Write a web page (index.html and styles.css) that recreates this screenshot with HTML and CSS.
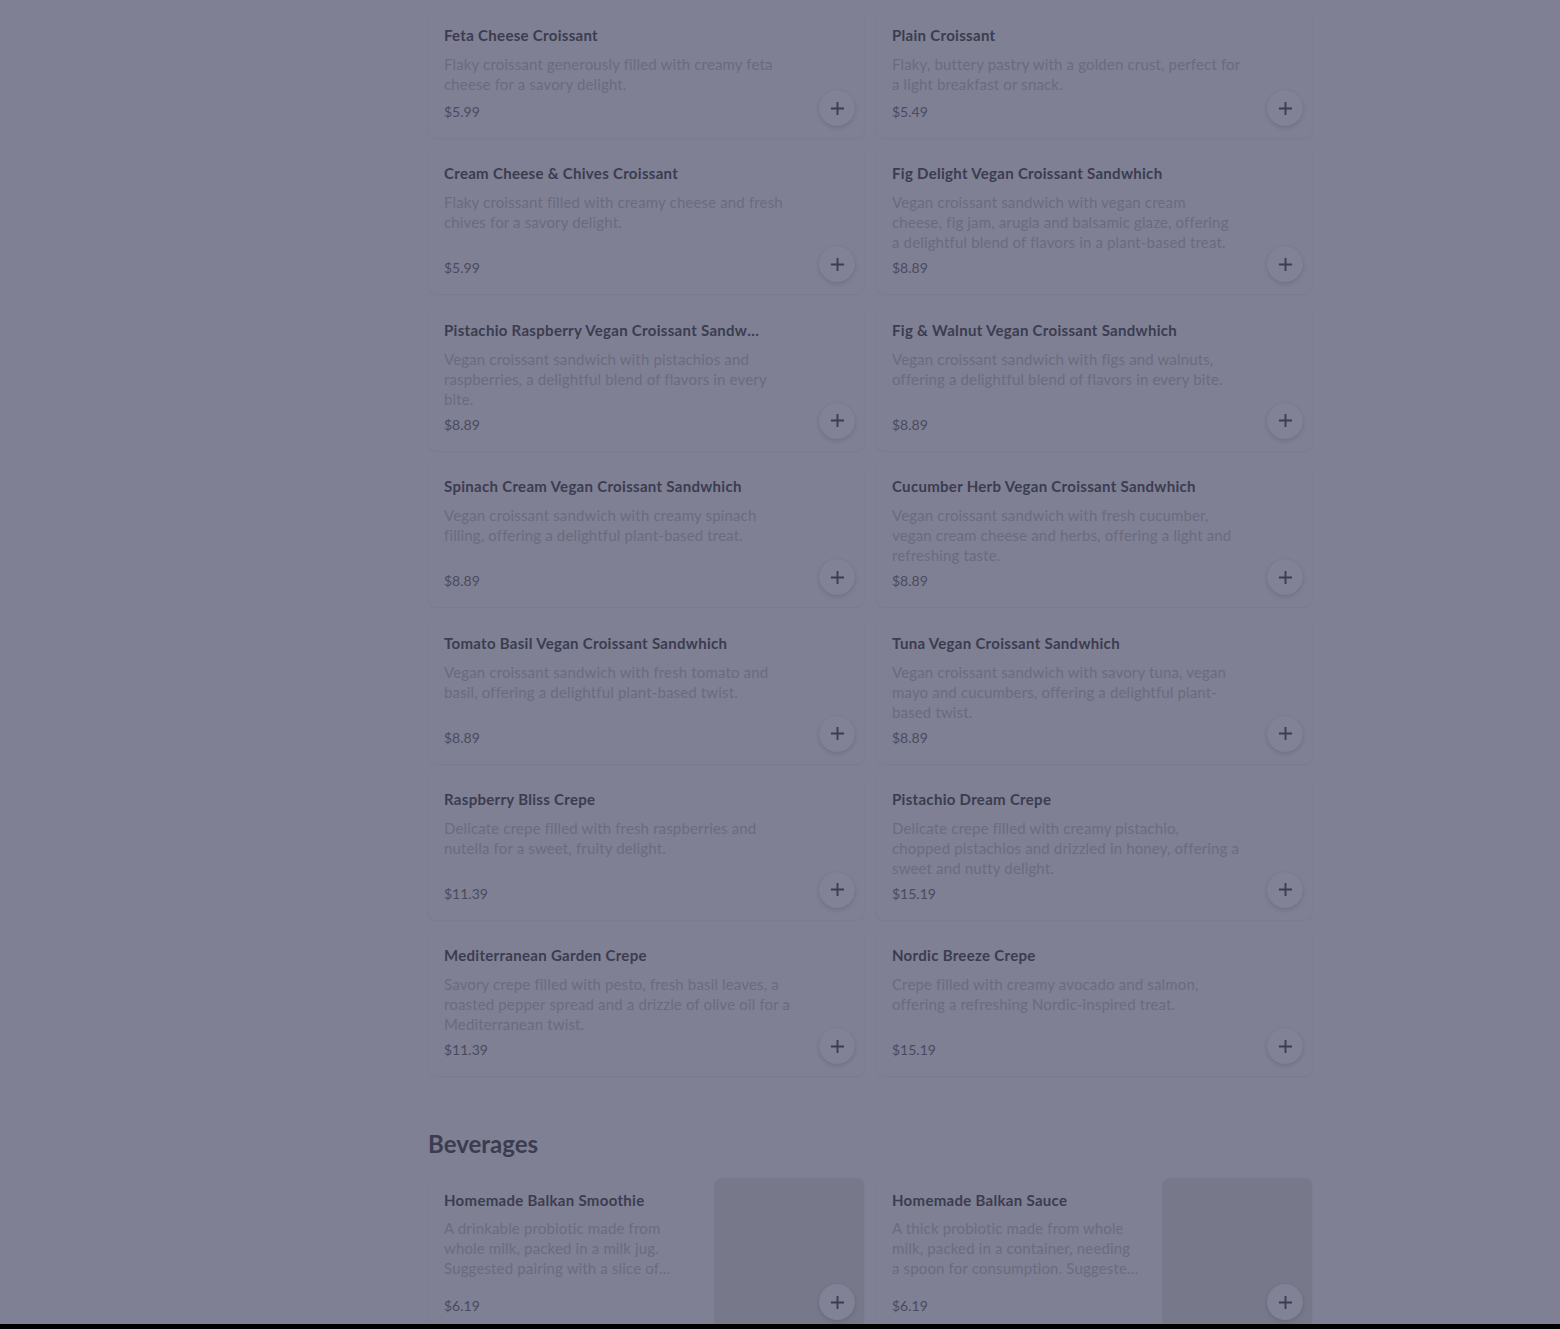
FILE: index.html
```html
<!DOCTYPE html>
<html lang="en">
<head>
<meta charset="utf-8">
<title>Menu</title>
<link rel="stylesheet" href="styles.css">
</head>
<body>
<div class="page">
  <main class="menu">
    <section class="category">
      <div class="grid">
        <article class="card">
          <div class="info">
            <h3 class="name">Feta Cheese Croissant</h3>
            <p class="desc">Flaky croissant generously filled with creamy feta cheese for a savory delight.</p>
            <div class="price">$5.99</div>
          </div>
          <button class="add" aria-label="Add"><svg viewBox="0 0 16 16"><path d="M8 1v14M1 8h14"/></svg></button>
        </article>
        <article class="card">
          <div class="info">
            <h3 class="name">Plain Croissant</h3>
            <p class="desc">Flaky, buttery pastry with a golden crust, perfect for a light breakfast or snack.</p>
            <div class="price">$5.49</div>
          </div>
          <button class="add" aria-label="Add"><svg viewBox="0 0 16 16"><path d="M8 1v14M1 8h14"/></svg></button>
        </article>
        <article class="card">
          <div class="info">
            <h3 class="name">Cream Cheese &amp; Chives Croissant</h3>
            <p class="desc">Flaky croissant filled with creamy cheese and fresh chives for a savory delight.</p>
            <div class="price">$5.99</div>
          </div>
          <button class="add" aria-label="Add"><svg viewBox="0 0 16 16"><path d="M8 1v14M1 8h14"/></svg></button>
        </article>
        <article class="card">
          <div class="info">
            <h3 class="name">Fig Delight Vegan Croissant Sandwhich</h3>
            <p class="desc">Vegan croissant sandwich with vegan cream<br>cheese, fig jam, arugla and balsamic glaze, offering<br>a delightful blend of flavors in a plant-based treat.</p>
            <div class="price">$8.89</div>
          </div>
          <button class="add" aria-label="Add"><svg viewBox="0 0 16 16"><path d="M8 1v14M1 8h14"/></svg></button>
        </article>
        <article class="card">
          <div class="info">
            <h3 class="name">Pistachio Raspberry Vegan Croissant Sandwhich</h3>
            <p class="desc">Vegan croissant sandwich with pistachios and raspberries, a delightful blend of flavors in every<br>bite.</p>
            <div class="price">$8.89</div>
          </div>
          <button class="add" aria-label="Add"><svg viewBox="0 0 16 16"><path d="M8 1v14M1 8h14"/></svg></button>
        </article>
        <article class="card">
          <div class="info">
            <h3 class="name">Fig &amp; Walnut Vegan Croissant Sandwhich</h3>
            <p class="desc">Vegan croissant sandwich with figs and walnuts, offering a delightful blend of flavors in every bite.</p>
            <div class="price">$8.89</div>
          </div>
          <button class="add" aria-label="Add"><svg viewBox="0 0 16 16"><path d="M8 1v14M1 8h14"/></svg></button>
        </article>
        <article class="card">
          <div class="info">
            <h3 class="name">Spinach Cream Vegan Croissant Sandwhich</h3>
            <p class="desc">Vegan croissant sandwich with creamy spinach filling, offering a delightful plant-based treat.</p>
            <div class="price">$8.89</div>
          </div>
          <button class="add" aria-label="Add"><svg viewBox="0 0 16 16"><path d="M8 1v14M1 8h14"/></svg></button>
        </article>
        <article class="card">
          <div class="info">
            <h3 class="name">Cucumber Herb Vegan Croissant Sandwhich</h3>
            <p class="desc">Vegan croissant sandwich with fresh cucumber, vegan cream cheese and herbs, offering a light and refreshing taste.</p>
            <div class="price">$8.89</div>
          </div>
          <button class="add" aria-label="Add"><svg viewBox="0 0 16 16"><path d="M8 1v14M1 8h14"/></svg></button>
        </article>
        <article class="card">
          <div class="info">
            <h3 class="name">Tomato Basil Vegan Croissant Sandwhich</h3>
            <p class="desc">Vegan croissant sandwich with fresh tomato and basil, offering a delightful plant-based twist.</p>
            <div class="price">$8.89</div>
          </div>
          <button class="add" aria-label="Add"><svg viewBox="0 0 16 16"><path d="M8 1v14M1 8h14"/></svg></button>
        </article>
        <article class="card">
          <div class="info">
            <h3 class="name">Tuna Vegan Croissant Sandwhich</h3>
            <p class="desc">Vegan croissant sandwich with savory tuna, vegan mayo and cucumbers, offering a delightful plant-based twist.</p>
            <div class="price">$8.89</div>
          </div>
          <button class="add" aria-label="Add"><svg viewBox="0 0 16 16"><path d="M8 1v14M1 8h14"/></svg></button>
        </article>
        <article class="card">
          <div class="info">
            <h3 class="name">Raspberry Bliss Crepe</h3>
            <p class="desc">Delicate crepe filled with fresh raspberries and nutella for a sweet, fruity delight.</p>
            <div class="price">$11.39</div>
          </div>
          <button class="add" aria-label="Add"><svg viewBox="0 0 16 16"><path d="M8 1v14M1 8h14"/></svg></button>
        </article>
        <article class="card">
          <div class="info">
            <h3 class="name">Pistachio Dream Crepe</h3>
            <p class="desc">Delicate crepe filled with creamy pistachio,<br>chopped pistachios and drizzled in honey, offering a<br>sweet and nutty delight.</p>
            <div class="price">$15.19</div>
          </div>
          <button class="add" aria-label="Add"><svg viewBox="0 0 16 16"><path d="M8 1v14M1 8h14"/></svg></button>
        </article>
        <article class="card">
          <div class="info">
            <h3 class="name">Mediterranean Garden Crepe</h3>
            <p class="desc">Savory crepe filled with pesto, fresh basil leaves, a roasted pepper spread and a drizzle of olive oil for a Mediterranean twist.</p>
            <div class="price">$11.39</div>
          </div>
          <button class="add" aria-label="Add"><svg viewBox="0 0 16 16"><path d="M8 1v14M1 8h14"/></svg></button>
        </article>
        <article class="card">
          <div class="info">
            <h3 class="name">Nordic Breeze Crepe</h3>
            <p class="desc">Crepe filled with creamy avocado and salmon, offering a refreshing Nordic-inspired treat.</p>
            <div class="price">$15.19</div>
          </div>
          <button class="add" aria-label="Add"><svg viewBox="0 0 16 16"><path d="M8 1v14M1 8h14"/></svg></button>
        </article>
      </div>
    </section>

    <section class="category beverages">
      <h2 class="cat-title">Beverages</h2>
      <div class="grid">
        <article class="card with-image">
          <div class="info">
            <h3 class="name">Homemade Balkan Smoothie</h3>
            <p class="desc clamp">A drinkable probiotic made from whole milk, packed in a milk jug. Suggested pairing with a slice of bread or pastry.</p>
            <div class="price">$6.19</div>
          </div>
          <div class="thumb"></div>
          <button class="add" aria-label="Add"><svg viewBox="0 0 16 16"><path d="M8 1v14M1 8h14"/></svg></button>
        </article>
        <article class="card with-image">
          <div class="info">
            <h3 class="name">Homemade Balkan Sauce</h3>
            <p class="desc clamp">A thick probiotic made from whole milk, packed in a container, needing<br>a spoon for consumption. Suggested pairing with bread.</p>
            <div class="price">$6.19</div>
          </div>
          <div class="thumb"></div>
          <button class="add" aria-label="Add"><svg viewBox="0 0 16 16"><path d="M8 1v14M1 8h14"/></svg></button>
        </article>
      </div>
    </section>
  </main>
</div>
<div class="bottom-edge"></div>
</body>
</html>
```

FILE: styles.css
```css
html, body {
  margin: 0;
  padding: 0;
  background: #7f8093;
  height: 100%;
  overflow: hidden;
}

body {
  font-family: Lato, "Liberation Sans", sans-serif;
  color: #3c3d51;
}

.page {
  padding-left: 428px;
  padding-top: 12px;
}

.menu {
  width: 884px;
}

.grid {
  display: grid;
  grid-template-columns: 1fr 1fr;
  gap: 12.4px 12px;
}

.card {
  position: relative;
  display: flex;
  min-height: 126px;
  background: #7f8093;
  border-radius: 8px;
  box-shadow: 0 0 0 1px rgba(60, 61, 81, 0.02), 0 1px 2px rgba(40, 40, 60, 0.03);
}

.info {
  flex: 1;
  min-width: 0;
  display: flex;
  flex-direction: column;
  padding: 12px 64px 16px 16px;
}

.name {
  margin: 0;
  font-size: 15px;
  line-height: 22px;
  font-weight: 700;
  letter-spacing: 0.3px;
  color: #3b3c50;
  max-width: 316px;
  white-space: nowrap;
  overflow: hidden;
  text-overflow: ellipsis;
}

.desc {
  margin: 8px 0 0;
  font-size: 15px;
  line-height: 20px;
  letter-spacing: 0.15px;
  color: #6a6b7f;
}

.price {
  margin-top: auto;
  padding-top: 6px;
  font-size: 14px;
  line-height: 20px;
  color: #4a4b60;
}

.add {
  position: absolute;
  right: 9px;
  bottom: 12px;
  width: 36px;
  height: 36px;
  padding: 0;
  border: none;
  border-radius: 50%;
  background: #818295;
  box-shadow: 0 2px 4px rgba(30, 30, 50, 0.14), 0 0 1px rgba(30, 30, 50, 0.1);
  display: flex;
  align-items: center;
  justify-content: center;
}

.add svg {
  width: 15px;
  height: 15px;
  fill: none;
  stroke: #3c3d51;
  stroke-width: 2;
}

.beverages {
  margin-top: 52px;
}

.cat-title {
  margin: 0 0 18px;
  font-size: 24px;
  line-height: 32px;
  font-weight: 700;
  color: #3b3c50;
}

.with-image {
  min-height: 154px;
}

.with-image .info {
  padding-right: 16px;
}

.with-image .name {
  margin-top: -1px;
}

.with-image .desc {
  margin-top: 7px;
}

.clamp {
  display: -webkit-box;
  -webkit-line-clamp: 3;
  -webkit-box-orient: vertical;
  overflow: hidden;
}

.thumb {
  flex: 0 0 150px;
  background: #77788a;
  border-radius: 8px;
}

.bottom-edge {
  position: fixed;
  left: 0;
  right: 0;
  bottom: 0;
  height: 5px;
  background: #000;
}
```
